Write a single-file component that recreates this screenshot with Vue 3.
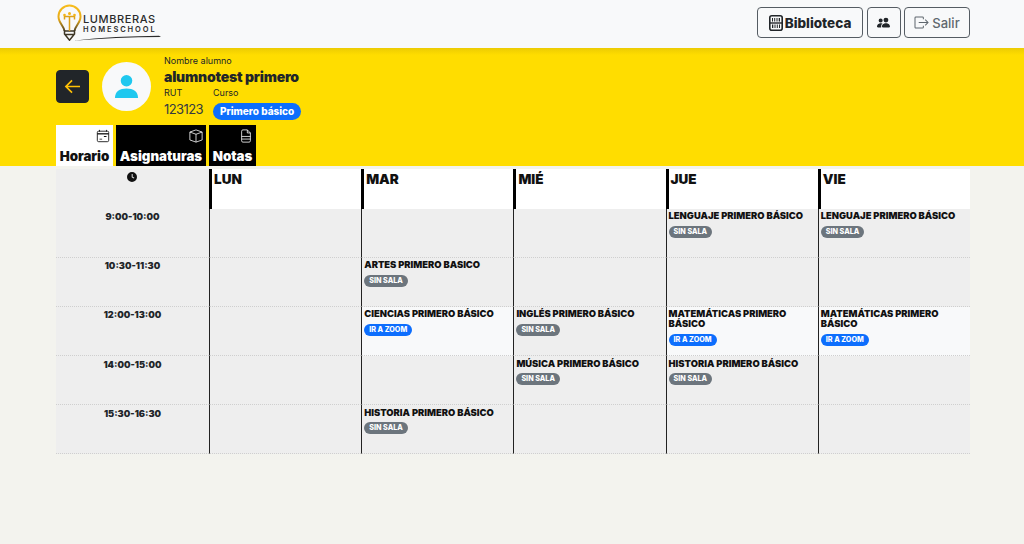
<script setup>
const days = ["LUN", "MAR", "MIÉ", "JUE", "VIE"];

const rows = [
  {
    time: "9:00-10:00",
    cells: [null, null, null, { name: "LENGUAJE PRIMERO BÁSICO" }, { name: "LENGUAJE PRIMERO BÁSICO" }],
  },
  {
    time: "10:30-11:30",
    cells: [null, { name: "ARTES PRIMERO BASICO" }, null, null, null],
  },
  {
    time: "12:00-13:00",
    cells: [
      null,
      { name: "CIENCIAS PRIMERO BÁSICO", zoom: true },
      { name: "INGLÉS PRIMERO BÁSICO" },
      { name: "MATEMÁTICAS PRIMERO BÁSICO", zoom: true },
      { name: "MATEMÁTICAS PRIMERO BÁSICO", zoom: true },
    ],
  },
  {
    time: "14:00-15:00",
    cells: [null, null, { name: "MÚSICA PRIMERO BÁSICO" }, { name: "HISTORIA PRIMERO BÁSICO" }, null],
  },
  {
    time: "15:30-16:30",
    cells: [null, { name: "HISTORIA PRIMERO BÁSICO" }, null, null, null],
  },
];
</script>

<template>
  <div class="page">
    <header class="topbar">
      <div class="logo">
        <svg class="logo-bulb" viewBox="0 0 25 37" aria-hidden="true">
          <defs>
            <linearGradient id="bulbGold" x1="0" y1="0" x2="0" y2="1">
              <stop offset="0" stop-color="#f7bd1d" />
              <stop offset="0.55" stop-color="#e5a918" />
              <stop offset="1" stop-color="#4d4128" />
            </linearGradient>
          </defs>
          <path d="M7.500 27C7 22 1.500 19 1.500 12.500a11 11 0 0 1 22 0C23.500 19 18 22 17.500 27" fill="none" stroke="url(#bulbGold)" stroke-width="2" />
          <path d="M7.500 27v3l5 6.200 5-6.200v-3zM8 30.500h9" fill="none" stroke="#3d3626" stroke-width="1.500" />
          <path d="M12.500 27V12M7.500 15.500v-3h10v3" fill="none" stroke="#dca118" stroke-width="1.500" />
          <circle cx="12.500" cy="9.500" r="1.500" fill="#f2b417" />
          <circle cx="7.500" cy="11" r="1.300" fill="#f2b417" />
          <circle cx="17.500" cy="11" r="1.300" fill="#f2b417" />
        </svg>
        <div class="logo-text">
          <span class="logo-top">LUMBRERAS</span>
          <span class="logo-bottom">HOMESCHOOL</span>
        </div>
        <svg class="logo-swoosh" viewBox="0 0 88 6" aria-hidden="true">
          <path d="M0 5.800C28 2.500 58 1 86 .8l2 1.200C58 2 28 3.500 0 5.800z" fill="#2b2b2b" />
        </svg>
      </div>
      <div class="actions">
        <button class="btn btn-strong" type="button">
          <svg class="btn-icon" viewBox="0 0 14 16" aria-hidden="true">
            <rect x=".8" y=".8" width="12.400" height="14.400" rx="2" fill="none" stroke="#212529" stroke-width="1.600" />
            <path d="M1 8h12" stroke="#212529" stroke-width="1.400" />
            <path d="M3 3h1v3.500H3zM5.200 3h1v3.500h-1zM7.500 3h1v3.500h-1zM9.700 3H11v3.500H9.700zM3 9.500h1.300V13H3zM5.500 9.500h1V13h-1zM7.800 9.500h1V13h-1zM10 9.500h1V13h-1z" fill="#212529" />
          </svg>
          Biblioteca
        </button>
        <button class="btn btn-square" type="button" aria-label="Usuarios">
          <svg class="people" viewBox="0 0 16 16" aria-hidden="true">
            <path d="M7 14s-1 0-1-1 1-4 5-4 5 3 5 4-1 1-1 1H7zm4-6a3 3 0 1 0 0-6 3 3 0 0 0 0 6zM5.200 14A2.200 2.200 0 0 1 5 13c0-1.400.7-2.800 2-3.700A6.500 6.500 0 0 0 5 9c-4 0-5 3-5 4s1 1 1 1h4.200zM4.500 8a2.500 2.500 0 1 0 0-5 2.500 2.500 0 0 0 0 5z" fill="#212529" />
          </svg>
        </button>
        <button class="btn btn-exit" type="button">
          <svg class="exit-icon" viewBox="0 0 16 14" aria-hidden="true">
            <path d="M10 10.500V12a1 1 0 0 1-1 1H2a1 1 0 0 1-1-1V2a1 1 0 0 1 1-1h7a1 1 0 0 1 1 1v1.500" fill="none" stroke="#5f676e" stroke-width="1.100" />
            <path d="M5 7h10M12 4l3 3-3 3" fill="none" stroke="#5f676e" stroke-width="1.100" />
          </svg>
          Salir
        </button>
      </div>
    </header>

    <section class="band">
      <div class="student">
        <button class="back" type="button" aria-label="Volver">
          <svg viewBox="0 0 18 16" aria-hidden="true">
            <path d="M17 8H2M8.500 1.500 2 8l6.500 6.500" fill="none" stroke="#ffc107" stroke-width="1.800" />
          </svg>
        </button>
        <div class="avatar">
          <svg viewBox="0 0 26 26" aria-hidden="true">
            <circle cx="13" cy="7" r="6" fill="#1fc8ef" />
            <path d="M1 25c0-7 5-10 12-10s12 3 12 10z" fill="#1fc8ef" />
          </svg>
        </div>
        <div class="info">
          <div class="label">Nombre alumno</div>
          <div class="name">alumnotest primero</div>
          <div class="meta">
            <div class="meta-col">
              <div class="label">RUT</div>
              <div class="rut">123123</div>
            </div>
            <div class="meta-col">
              <div class="label">Curso</div>
              <span class="course">Primero básico</span>
            </div>
          </div>
        </div>
      </div>
      <nav class="tabs">
        <a class="tab tab-active">
          <svg viewBox="0 0 16 16" aria-hidden="true">
            <rect x="1.500" y="2.500" width="13" height="12" rx="1.500" fill="none" stroke="currentColor" />
            <path d="M1.500 5.500h13" stroke="currentColor" stroke-width="1.500" />
            <path d="M4 1v2M12 1v2" stroke="currentColor" />
            <path d="M4 11h3v1H4zM9 8h3v1H9z" fill="currentColor" />
          </svg>
          <span>Horario</span>
        </a>
        <a class="tab">
          <svg viewBox="0 0 16 16" aria-hidden="true">
            <path d="M8 1 15 3.500v9L8 15l-7-2.500v-9zM1 3.500 8 6l7-2.500M8 6v9" fill="none" stroke="currentColor" stroke-width=".9" />
          </svg>
          <span>Asignaturas</span>
        </a>
        <a class="tab">
          <svg viewBox="0 0 16 16" aria-hidden="true">
            <path d="M9.500 1H4.500A1.500 1.500 0 0 0 3 2.500v11A1.500 1.500 0 0 0 4.500 15h7a1.500 1.500 0 0 0 1.500-1.500V4.500zM9.500 1v3.500H13M3 8.500h10M3 11.500h10" fill="none" stroke="currentColor" stroke-width=".9" />
          </svg>
          <span>Notas</span>
        </a>
      </nav>
    </section>

    <section class="schedule">
      <div class="grid">
        <div class="head-time">
          <svg viewBox="0 0 16 16" aria-hidden="true">
            <path d="M8 0a8 8 0 1 1 0 16A8 8 0 0 1 8 0zm-.5 3v5.500l3.500 2 .8-1.300-2.800-1.600V3z" fill="#111" />
          </svg>
        </div>
        <div v-for="day in days" :key="day" class="head-day">{{ day }}</div>

        <template v-for="row in rows" :key="row.time">
          <div class="time">{{ row.time }}</div>
          <div
            v-for="(cell, i) in row.cells"
            :key="i"
            class="cell"
            :class="{ 'cell-light': cell && cell.zoom }"
          >
            <template v-if="cell">
              <div class="subject">{{ cell.name }}</div>
              <span class="badge" :class="cell.zoom ? 'badge-zoom' : 'badge-none'">
                {{ cell.zoom ? "IR A ZOOM" : "SIN SALA" }}
              </span>
            </template>
          </div>
        </template>
      </div>
    </section>
  </div>
</template>

<style scoped>
.page {
  min-height: 544px;
  background: #f3f3ee;
  font-family: Inter, "Open Sans", "Liberation Sans", sans-serif;
  color: #212529;
}

.topbar {
  height: 48px;
  box-sizing: border-box;
  padding: 0 54px 0 56px;
  display: flex;
  justify-content: space-between;
  background: #f8f9fa;
}

.logo {
  position: relative;
  display: flex;
  padding: 4px 0 0 1px;
}

.logo-bulb {
  width: 25px;
  height: 37px;
}

.logo-text {
  display: flex;
  flex-direction: column;
  margin: 9px 0 0 1px;
  color: #2b2b2b;
}

.logo-top {
  font-size: 11px;
  line-height: 12px;
  font-weight: 500;
  letter-spacing: 0.6px;
}

.logo-bottom {
  font-size: 7.500px;
  line-height: 9px;
  font-weight: 600;
  letter-spacing: 1.900px;
}

.logo-swoosh {
  position: absolute;
  top: 35px;
  left: 17px;
  width: 88px;
  height: 6px;
}

.actions {
  display: flex;
  gap: 3.500px;
  padding-top: 7px;
}

.btn {
  height: 31px;
  box-sizing: border-box;
  display: flex;
  align-items: center;
  justify-content: center;
  gap: 2px;
  background: transparent;
  border: 1px solid #555c63;
  border-radius: 4px;
  font-family: inherit;
  font-size: 13.500px;
  padding: 0;
}

.btn-strong {
  width: 106px;
  font-weight: 800;
  color: #212529;
}

.btn-icon {
  width: 14px;
  height: 16px;
}

.btn-square {
  width: 34px;
}

.people {
  width: 13px;
  height: 13px;
}

.btn-exit {
  width: 66px;
  gap: 3px;
  color: #5f676e;
  font-size: 13px;
  font-weight: 500;
}

.exit-icon {
  width: 15px;
  height: 13px;
}

.band {
  height: 118px;
  box-sizing: border-box;
  padding: 6px 56px 0;
  background: linear-gradient(#eccb02 0, #ffdd00 7px);
  display: flex;
  flex-direction: column;
  justify-content: space-between;
}

.student {
  display: flex;
  align-items: center;
}

.back {
  width: 33px;
  height: 33px;
  padding: 0;
  display: flex;
  align-items: center;
  justify-content: center;
  background: #212529;
  border: 1px solid #212529;
  border-radius: 4px;
}

.back svg {
  width: 17px;
  height: 15px;
}

.avatar {
  width: 49px;
  height: 49px;
  margin-left: 13px;
  border-radius: 50%;
  background: #f8f9fa;
  display: flex;
  align-items: center;
  justify-content: center;
}

.avatar svg {
  width: 25px;
  height: 25px;
}

.info {
  margin: 0 0 -1px 13px;
  padding-top: 1px;
}

.label {
  font-size: 9px;
  line-height: 12px;
  color: #212529;
}

.name {
  font-size: 14px;
  line-height: 20px;
  font-weight: 900;
  letter-spacing: -0.2px;
  color: #212529;
}

.meta {
  display: flex;
  gap: 10px;
}

.meta-col {
  min-width: 39px;
}

.rut {
  font-size: 13px;
  line-height: 20px;
  letter-spacing: -0.6px;
  color: #343a40;
}

.course {
  display: inline-block;
  height: 17px;
  line-height: 17px;
  padding: 0 7px;
  border-radius: 9px;
  background: #0d6efd;
  color: #fff;
  font-size: 10px;
  font-weight: 800;
}

.tabs {
  display: flex;
  gap: 3px;
  height: 41px;
}

.tab {
  position: relative;
  width: 90px;
  display: flex;
  flex-direction: column;
  align-items: center;
  justify-content: flex-end;
  background: #000;
  color: #fff;
  font-size: 13.300px;
  line-height: 20px;
  font-weight: 900;
}

.tab:first-child {
  width: 57px;
}

.tab:last-child {
  width: 47px;
}

.tab svg {
  position: absolute;
  top: 4px;
  right: 3px;
  width: 14px;
  height: 14px;
}

.tab-active {
  background: #fff;
  color: #111;
}

.schedule {
  padding: 3px 54px 0 56px;
}

.grid {
  display: grid;
  grid-template-columns: 153px repeat(5, 152.200px);
  grid-template-rows: 39.500px;
  grid-auto-rows: 49.200px;
}

.head-time {
  background: #eeeeee;
  display: flex;
  justify-content: center;
  padding: 3px 1px 0 0;
}

.head-time svg {
  width: 10px;
  height: 10px;
}

.head-day {
  background: #fff;
  border-left: 3px solid #000;
  padding-left: 2px;
  font-size: 13.500px;
  line-height: 20px;
  font-weight: 900;
  color: #111;
}

.time,
.cell {
  background: #eeeeee;
  border-bottom: 1px dotted #cfcfcf;
  box-sizing: border-box;
}

.time {
  padding-top: 1.500px;
  text-align: center;
  font-size: 9.200px;
  line-height: 13px;
  font-weight: 900;
  color: #212529;
}

.cell {
  border-left: 1px solid #222;
  padding: 2.500px 1px 0 2px;
}

.cell-light {
  background: #f8f9fa;
}

.subject {
  font-size: 9.400px;
  line-height: 10px;
  font-weight: 900;
  color: #111;
}

.badge {
  display: inline-block;
  height: 12px;
  line-height: 12px;
  margin-top: 4.500px;
  padding: 0 5px;
  border-radius: 6px;
  color: #fff;
  font-size: 7.200px;
  font-weight: 800;
  vertical-align: top;
}

.badge-none {
  background: #6c757d;
}

.badge-zoom {
  background: #0d6efd;
}
</style>

<style>
body {
  margin: 0;
  background: #f3f3ee;
}
</style>
